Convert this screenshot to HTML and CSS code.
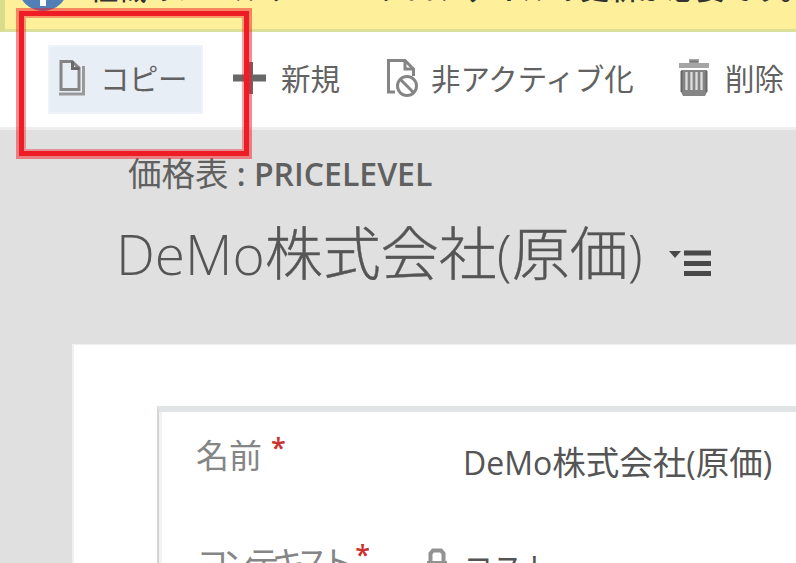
FILE: index.html
```html
<!DOCTYPE html>
<html lang="ja">
<head>
<meta charset="utf-8">
<title>価格表</title>
<link rel="stylesheet" href="styles.css">
</head>
<body>
<div class="notice">
  <svg class="notice-icon" width="50" height="50" viewBox="0 0 50 50"><circle cx="25" cy="25" r="25" fill="#527fb5"/><path d="M25 20v25" stroke="#fff" stroke-width="6"/></svg>
  <span class="notice-text">組織のメールサーバープロファイルの更新が必要です。</span>
</div>
<nav class="toolbar">
  <button class="command command-active">
    <svg width="28" height="40" viewBox="0 0 28 40" fill="none"><path d="M1 37H25.500V9" stroke="#9a9a9a" stroke-width="3"/><path d="M3 4.500H14L21 11V32.500H3Z" fill="#e8eef6" stroke="#858585" stroke-width="3"/><path d="M14.500 4v7.500h7" stroke="#696969" stroke-width="3"/></svg>
    <span class="copy-label">コピー</span>
  </button>
  <button class="command command-new">
    <svg width="34" height="34" viewBox="0 0 34 34"><path d="M0 18H33M16.500 2V34" stroke="#686868" stroke-width="7"/></svg>
    <span>新規</span>
  </button>
  <button class="command command-deactivate">
    <svg width="32" height="40" viewBox="0 0 32 40" fill="none" stroke="#858585" stroke-width="3"><path d="M9 35H2.500V3.500H19L27.500 12V19"/><path d="M19 3v9h9"/><circle cx="21" cy="29" r="9.500"/><path d="M14.500 22.500l13 13"/></svg>
    <span>非アクティブ化</span>
  </button>
  <button class="command command-delete">
    <svg width="32" height="40" viewBox="0 0 32 40"><path d="M11 2h10v4h10v5H1V6h10Z" fill="#a5a5a5"/><path d="M12 4.500h8" stroke="#777" stroke-width="2"/><path d="M3 13H29V35l-2 4H5l-2-4Z" fill="#858585"/><path d="M8.500 15v18M13.500 15v18M18.500 15v18M23.500 15v18" stroke="#dedede" stroke-width="2.300"/><path d="M3.500 14v21M28.500 14v21" stroke="#696969" stroke-width="2"/></svg>
    <span>削除</span>
  </button>
</nav>
<header class="record-header">
  <div class="record-type">価格表<span class="entity"> : PRICELEVEL</span></div>
  <div class="title-row">
    <h1><span class="title-latin">DeMo</span>株式会社<span class="paren">(</span>原価<span class="paren">)</span></h1>
    <svg class="record-menu" width="43" height="28" viewBox="0 0 43 28"><path d="M0 1h12L6 8Z" fill="#484848"/><path d="M15 3H42M15 13.500H42M15 23.500H42" stroke="#484848" stroke-width="5"/></svg>
  </div>
</header>
<main class="card">
  <section class="form">
    <div class="field">
      <label>名前<sup>*</sup></label>
      <div class="value"><span class="value-latin">DeMo</span>株式会社<span class="value-latin">(</span>原価<span class="value-latin">)</span></div>
    </div>
    <div class="field field-context">
      <label class="context-label">コンテキスト<sup>*</sup></label>
      <div class="locked">
        <svg width="20" height="28" viewBox="0 0 20 28"><path d="M3.500 13V5.500L6 2.500h8l2.500 3V13" fill="none" stroke="#929292" stroke-width="4"/><path d="M0 13h20v15H0Z" fill="#929292"/></svg>
        <span>コスト</span>
      </div>
    </div>
  </section>
</main>
<div class="highlight"></div>
</body>
</html>
```
FILE: styles.css
```css
* { box-sizing: border-box; }
body {
  margin: 0;
  width: 796px;
  height: 563px;
  overflow: hidden;
  position: relative;
  background: #e0e0e0;
  font-family: "Open Sans", "Noto Sans CJK JP", sans-serif;
  color: #555;
}
svg { display: block; flex: none; }
.notice {
  height: 32px;
  display: flex;
  overflow: hidden;
  background: #feef9a;
  border-left: 5px solid #d9dc8b;
  border-bottom: 3px solid #dcdf99;
}
.notice-icon { margin: -39px 0 0 13px; }
.notice-text {
  margin: -27px 0 0 21px;
  font-size: 29px;
  font-weight: 500;
  line-height: 32px;
  color: #333;
  white-space: nowrap;
}
.toolbar {
  height: 98px;
  display: flex;
  align-items: flex-start;
  padding: 13px 0 0 48px;
  background: #fff;
  border-bottom: 3px solid #eee;
}
.command {
  display: flex;
  align-items: center;
  flex: none;
  height: 69px;
  padding: 0 0 5px;
  border: 0;
  background: none;
  font: 29.5px/40px "Noto Sans CJK JP", sans-serif;
  color: #626262;
  white-space: nowrap;
}
.command-active {
  width: 155px;
  padding-left: 8px;
  gap: 14px;
  background: #e8eef6;
  border: 2px solid #eff3f9;
}
.copy-label { letter-spacing: -.5px; }
.command-new { margin-left: 30px; width: 153px; gap: 14px; }
.command-deactivate { width: 292px; gap: 13px; letter-spacing: -.1px; }
.command-delete { gap: 15px; }
.record-header { height: 214px; padding: 21px 0 0 116px; }
.record-type {
  padding-left: 12px;
  height: 42px;
  font: 33.500px/42px "Noto Sans CJK JP", sans-serif;
  color: #606060;
  white-space: pre;
}
.entity {
  font: 600 32px/42px "Open Sans", sans-serif;
}
.title-row { display: flex; align-items: flex-start; }
h1 {
  width: 553px;
  margin: 13px 0 0;
  font: 300 58px/88px "Noto Sans CJK JP", sans-serif;
  color: #555;
  white-space: nowrap;
  -webkit-text-stroke: .4px #555;
}
.title-latin, .paren {
  font-family: "Open Sans", sans-serif;
  font-size: 55px;
  -webkit-text-stroke: 0;
}
.record-menu { margin-top: 57px; }
.card {
  margin-left: 72px;
  height: 219px;
  padding: 61px 0 0 83px;
  background: #fff;
  border: 0 solid #f0f0f0;
  border-width: 1px 0 0 2px;
}
.form {
  height: 157px;
  overflow: hidden;
  border-top: 6px solid #e0e4e4;
  border-left: 2px solid #d2d5d5;
  box-shadow: inset 3px 0 #f2f2f2;
}
.field { display: flex; padding-left: 37px; height: 102px; }
label {
  width: 267px;
  padding-top: 18px;
  font: 33px/48px "Noto Sans CJK JP", sans-serif;
  color: #858585;
  white-space: nowrap;
}
sup {
  margin-left: 9px;
  font: 600 27px/20px "Open Sans", sans-serif;
  vertical-align: 10px;
  color: #ca3030;
}
.value {
  padding-top: 25px;
  font: 33.5px/48px "Noto Sans CJK JP", sans-serif;
  white-space: nowrap;
}
.value-latin { font-family: "Open Sans", sans-serif; font-size: 32px; }
.context-label { width: 231px; padding-top: 23px; letter-spacing: -7.800px; }
.locked {
  display: flex;
  align-items: flex-start;
  padding-top: 34px;
  gap: 16px;
  font: 30px/37px "Noto Sans CJK JP", sans-serif;
}
.highlight {
  position: absolute;
  left: 16px;
  top: 8px;
  width: 236px;
  height: 151px;
  border: 3px solid rgba(239, 28, 36, .5);
}
.highlight::before {
  content: "";
  position: absolute;
  inset: 0;
  border: 5px solid #ee1c25;
  box-shadow: inset 0 0 0 2px rgba(239, 28, 36, .4);
}
```
